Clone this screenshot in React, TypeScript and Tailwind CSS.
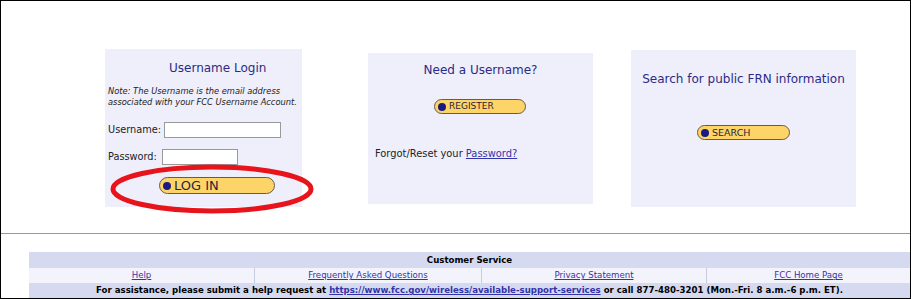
import React from "react";

const font = { fontFamily: '"DejaVu Sans", Verdana, sans-serif' };

function PillButton({ label, className, textClass }: { label: string; className: string; textClass: string }) {
  return (
    <button
      className={`flex items-center rounded-full border border-[#6b5a4a] bg-[#fdd468] pl-[3px] ${className}`}
    >
      <span className="mr-[3px] inline-block h-[8px] w-[8px] shrink-0 rounded-full bg-[#1a1a80]" />
      <span className={`leading-none text-[#2a1f3a] ${textClass}`}>{label}</span>
    </button>
  );
}

export default function App() {
  return (
    <div
      className="relative h-[299px] w-[911px] overflow-hidden border border-black bg-white"
      style={font}
    >
      {/* Panels */}
      <div className="flex h-[232px] items-start">
        {/* Username Login */}
        <div className="ml-[104px] mt-[48px] h-[158px] w-[197px] bg-[#efeffc] px-[3px] pt-[13px]">
          <h2 className="ml-[61px] text-[12px] leading-none text-[#2b2b84]">Username Login</h2>
          <p className="mt-[12px] text-[8.3px] italic leading-[11px] text-[#222]">
            Note: The Username is the email address associated with your FCC Username Account.
          </p>
          <div className="mt-[14px] flex items-center gap-[3px]">
            <span className="text-[9.75px] text-[#222]">Username:</span>
            <input className="h-[16px] w-[117px] border border-[#999] bg-white" />
          </div>
          <div className="mt-[11px] flex items-center gap-[5px]">
            <span className="text-[9.75px] text-[#222]">Password:</span>
            <input className="h-[16px] w-[76px] border border-[#999] bg-white" />
          </div>
          <PillButton
            label="LOG IN"
            className="ml-[51px] mt-[12px] h-[17px] w-[116px]"
            textClass="text-[13px]"
          />
        </div>

        {/* Need a Username */}
        <div className="ml-[66px] mt-[52px] h-[151px] w-[225px] bg-[#efeffc] px-[7px] pt-[11px]">
          <h2 className="text-center text-[12px] leading-none text-[#2b2b84]">Need a Username?</h2>
          <PillButton
            label="REGISTER"
            className="ml-[59px] mt-[23px] h-[15px] w-[92px]"
            textClass="text-[9px]"
          />
          <p className="mt-[33px] text-[9.9px] text-[#222]">
            Forgot/Reset your{" "}
            <a href="#" className="text-[#3333aa] underline">
              Password?
            </a>
          </p>
        </div>

        {/* Search FRN */}
        <div className="ml-[38px] mt-[49px] h-[157px] w-[225px] bg-[#efeffc] pt-[23px]">
          <h2 className="text-center text-[12px] leading-none text-[#2b2b84]">
            Search for public FRN information
          </h2>
          <PillButton
            label="SEARCH"
            className="ml-[66px] mt-[40px] h-[15px] w-[93px]"
            textClass="text-[9.5px]"
          />
        </div>
      </div>

      <hr className="border-t border-[#9a9a9a]" />

      {/* Footer */}
      <div className="ml-[28px] mt-[18px] text-[8.6px] leading-none">
        <div className="flex h-[16px] items-center justify-center bg-[#d5daf0] font-bold text-black">
          Customer Service
        </div>
        <div className="flex h-[15px] bg-[#f3f3fb] text-[#3333aa]">
          <a href="#" className="flex w-[226px] items-center justify-center border-r border-[#c8cce0] underline">Help</a>
          <a href="#" className="flex w-[227px] items-center justify-center border-r border-[#c8cce0] underline">Frequently Asked Questions</a>
          <a href="#" className="flex w-[225px] items-center justify-center border-r border-[#c8cce0] underline">Privacy Statement</a>
          <a href="#" className="flex flex-1 items-center justify-center underline">FCC Home Page</a>
        </div>
        <div className="flex h-[15px] items-center justify-center whitespace-nowrap bg-[#d5daf0] font-bold text-black">
          For assistance, please submit a help request at&nbsp;
          <a href="#" className="text-[#3333aa] underline">https://www.fcc.gov/wireless/available-support-services</a>
          &nbsp;or call 877-480-3201 (Mon.-Fri. 8 a.m.-6 p.m. ET).
        </div>
      </div>

      {/* Red annotation ellipse */}
      <svg className="pointer-events-none absolute left-[108px] top-[162px]" width="206" height="52">
        <ellipse cx="103" cy="26" rx="99" ry="22" fill="none" stroke="#e8141b" strokeWidth="5" />
      </svg>
    </div>
  );
}
